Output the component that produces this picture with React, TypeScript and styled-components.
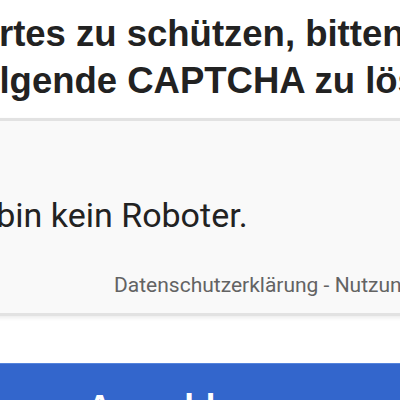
import React from "react";
import styled, { createGlobalStyle } from "styled-components";

const Global = createGlobalStyle`
  html, body { margin: 0; padding: 0; background: #ffffff; }
  body { overflow: hidden; }
`;

const Page = styled.div`
  width: 400px;
  height: 400px;
  overflow: hidden;
  display: flex;
  flex-direction: column;
  background: #ffffff;
  & > * { flex-shrink: 0; }
`;

const Heading = styled.div`
  padding-top: 10px;
  font-family: "Liberation Sans", Arial, sans-serif;
  font-weight: 700;
  font-size: 36.5px;
  line-height: 47px;
  color: #222222;
  white-space: nowrap;
`;

const HeadLine = styled.div<{ $shift: number }>`
  margin-left: ${(p) => p.$shift}px;
`;

const Card = styled.div`
  margin: 14px -12px 0;
  height: 192px;
  background: #f9f9f9;
  border: 3px solid #e2e2e2;
  box-shadow: 0 2px 4px rgba(0, 0, 0, 0.08);
  display: flex;
  flex-direction: column;
  white-space: nowrap;
`;

const Label = styled.div`
  margin-top: 74px;
  margin-left: -49px;
  font-family: Roboto, "Noto Sans", sans-serif;
  font-size: 34px;
  line-height: 40px;
  color: #222222;
`;

const Terms = styled.div`
  margin-top: 38px;
  margin-left: 123px;
  font-family: Roboto, "Noto Sans", sans-serif;
  font-size: 21px;
  line-height: 24px;
  color: #636363;
`;

const Button = styled.div`
  margin: 47px -10px 0;
  height: 80px;
  background: #3366cc;
  border-top: 1px solid #5584dc;
  display: flex;
  justify-content: flex-start;
  padding-left: 97px;
  padding-top: 23px;
  box-sizing: border-box;
  font-family: "Liberation Sans", Arial, sans-serif;
  font-weight: 700;
  font-size: 35px;
  line-height: 40px;
  color: #ffffff;
`;

export default function App() {
  return (
    <>
      <Global />
      <Page>
        <Heading>
          <HeadLine $shift={-137}>Passwortes zu schützen, bitten wir Sie,</HeadLine>
          <HeadLine $shift={-35}>folgende CAPTCHA zu lösen.</HeadLine>
        </Heading>
        <Card>
          <Label>Ich bin kein Roboter.</Label>
          <Terms>Datenschutzerklärung - Nutzungsbedingungen</Terms>
        </Card>
        <Button>Anmelden</Button>
      </Page>
    </>
  );
}
